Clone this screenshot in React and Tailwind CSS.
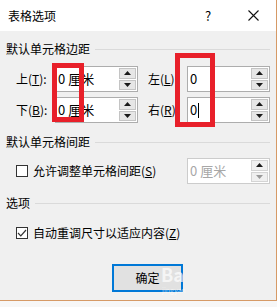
import React from 'react';

const font = { fontFamily: '"Noto Sans CJK SC", "Liberation Sans", sans-serif' };

const Spinner = ({ disabled }) => (
  <div className="flex h-full w-[18px] flex-col gap-px py-px pr-px">
    {['up', 'down'].map((dir) => (
      <div
        key={dir}
        className={`flex flex-1 items-center justify-center border ${
          disabled ? 'border-[#d4d4d4] bg-[#f0f0f0]' : 'border-[#c4c4c4] bg-[#e6e6e6]'
        }`}
      >
        <svg width="7" height="4" viewBox="0 0 7 4">
          <path
            d={dir === 'up' ? 'M0 4 L3.5 0 L7 4 Z' : 'M0 0 L3.5 4 L7 0 Z'}
            fill={disabled && dir === 'down' ? '#9a9a9a' : '#1a1a1a'}
          />
        </svg>
      </div>
    ))}
  </div>
);

const SpinInput = ({ value, width, disabled, caret }) => (
  <div
    className={`flex h-[26px] items-stretch border bg-white ${
      disabled ? 'border-[#cccccc]' : 'border-[#adadad]'
    } ${width}`}
  >
    <div
      className={`flex flex-1 items-center pl-[2px] text-[13px] ${disabled ? 'text-[#a7a7a7]' : 'text-black'}`}
    >
      {value}
      {caret && <span className="ml-px inline-block h-[15px] w-px bg-black" />}
    </div>
    <Spinner disabled={disabled} />
  </div>
);

const Heading = ({ children, pad = 'pt-[10px]' }) => (
  <div className={`flex items-center pl-[6px] pr-[6px] ${pad}`}>
    <span className="text-[12px] leading-[16px] text-black">{children}</span>
    <div className="ml-[5px] h-px flex-1 bg-[#dadada]" />
  </div>
);

const Label = ({ text, k, colon = true, width }) => (
  <span className={`text-[12px] text-black ${width}`}>
    {text}(<u>{k}</u>){colon ? ':' : ''}
  </span>
);

const Check = ({ checked }) => (
  <div className="flex h-[12px] w-[12px] items-center justify-center border border-[#333333] bg-white">
    {checked && (
      <svg width="10" height="8" viewBox="0 0 10 8">
        <path d="M1 4 L3.8 6.8 L9 1" fill="none" stroke="#333" strokeWidth="1.2" />
      </svg>
    )}
  </div>
);

export default function App() {
  return (
    <div className="relative h-[307px] w-[277px] overflow-hidden bg-[#f7f7f7]" style={font}>
      <div className="flex h-[301px] w-[277px] flex-col border-r border-b border-[#d69a66] bg-[#f0f0f0]">
        <div className="flex h-[31px] items-center bg-white pl-[8px]">
          <span className="text-[12px] text-black">表格选项</span>
          <span className="ml-[149px] text-[13px] text-black">?</span>
          <svg className="ml-[37px]" width="11" height="11" viewBox="0 0 11 11">
            <path d="M0.5 0.5 L10.5 10.5 M10.5 0.5 L0.5 10.5" stroke="#111" strokeWidth="1.1" />
          </svg>
        </div>

        <Heading>默认单元格边距</Heading>
        <div className="mt-[9px] flex gap-[5px] pl-[16px]">
          <div className="flex flex-col gap-[5px]">
            <div className="flex items-center">
              <Label text="上" k="T" width="w-[39px]" />
              <SpinInput value="0 厘米" width="w-[83px]" />
            </div>
            <div className="flex items-center">
              <Label text="下" k="B" width="w-[39px]" />
              <SpinInput value="0 厘米" width="w-[83px]" />
            </div>
          </div>
          <div className="ml-[5px] flex flex-col gap-[5px]">
            <div className="flex items-center">
              <Label text="左" k="L" width="w-[39px]" />
              <SpinInput value="0" width="w-[83px]" />
            </div>
            <div className="flex items-center">
              <Label text="右" k="R" colon={false} width="w-[39px]" />
              <SpinInput value="0" width="w-[83px]" caret />
            </div>
          </div>
        </div>

        <Heading pad="pt-[11px]">默认单元格间距</Heading>
        <div className="mt-[8px] flex items-center pl-[16px]">
          <Check />
          <span className="ml-[5px] text-[12px] text-black">
            允许调整单元格间距(<u>S</u>)
          </span>
          <div className="ml-auto mr-[6px]">
            <SpinInput value="0 厘米" width="w-[83px]" disabled />
          </div>
        </div>

        <Heading pad="pt-[11px]">选项</Heading>
        <div className="mt-[13px] flex items-center pl-[16px]">
          <Check checked />
          <span className="ml-[5px] text-[12px] text-black">
            自动重调尺寸以适应内容(<u>Z</u>)
          </span>
        </div>

        <div className="mt-[22px] flex pl-[112px]">
          <button
            type="button"
            className="flex h-[28px] w-[71px] items-center justify-center border-2 border-[#0078d7] bg-[#e1e1e1] text-[12px] text-black"
          >
            确定
          </button>
        </div>
      </div>

      <div className="absolute left-[52px] top-[63px] h-[59px] w-[32px] border-[5px] border-[#e8202a]" />
      <div className="absolute left-[175px] top-[53px] h-[74px] w-[40px] border-[5px] border-[#e8202a]" />

      <div className="pointer-events-none absolute left-[161px] top-[265px] text-[18px] font-bold leading-[18px] text-white/70">
        Ba
      </div>
      <div className="pointer-events-none absolute left-[162px] top-[286px] text-[7px] leading-[8px] text-white/60">
        jingyan
      </div>
    </div>
  );
}
